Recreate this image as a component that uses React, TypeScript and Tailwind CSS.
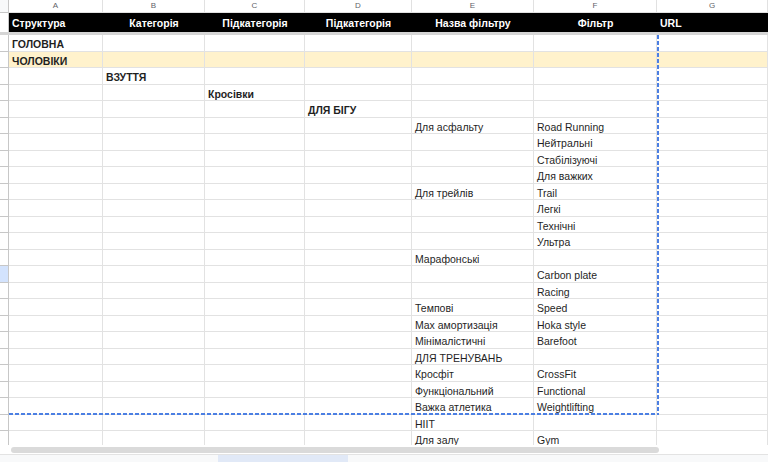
import React from 'react'

const cols = ['A', 'B', 'C', 'D', 'E', 'F', 'G']
const heads = [
  { text: 'Структура', align: 'justify-start' },
  { text: 'Категорія', align: 'justify-center' },
  { text: 'Підкатегорія', align: 'justify-center' },
  { text: 'Підкатегорія', align: 'justify-center' },
  { text: 'Назва фільтру', align: 'justify-center' },
  { text: 'Фільтр', align: 'justify-center' },
  { text: 'URL', align: 'justify-start' },
]

type Row = { cells: string[]; bold?: boolean; fill?: boolean; picked?: boolean }

const rows: Row[] = [
  { cells: ['ГОЛОВНА', '', '', '', '', ''], bold: true },
  { cells: ['ЧОЛОВІКИ', '', '', '', '', ''], bold: true, fill: true },
  { cells: ['', 'ВЗУТТЯ', '', '', '', ''], bold: true },
  { cells: ['', '', 'Кросівки', '', '', ''], bold: true },
  { cells: ['', '', '', 'ДЛЯ БІГУ', '', ''], bold: true },
  { cells: ['', '', '', '', 'Для асфальту', 'Road Running'] },
  { cells: ['', '', '', '', '', 'Нейтральні'] },
  { cells: ['', '', '', '', '', 'Стабілізуючі'] },
  { cells: ['', '', '', '', '', 'Для важких'] },
  { cells: ['', '', '', '', 'Для трейлів', 'Trail'] },
  { cells: ['', '', '', '', '', 'Легкі'] },
  { cells: ['', '', '', '', '', 'Технічні'] },
  { cells: ['', '', '', '', '', 'Ультра'] },
  { cells: ['', '', '', '', 'Марафонські', ''] },
  { cells: ['', '', '', '', '', 'Carbon plate'], picked: true },
  { cells: ['', '', '', '', '', 'Racing'] },
  { cells: ['', '', '', '', 'Темпові', 'Speed'] },
  { cells: ['', '', '', '', 'Max амортизація', 'Hoka style'] },
  { cells: ['', '', '', '', 'Мінімалістичні', 'Barefoot'] },
  { cells: ['', '', '', '', 'ДЛЯ ТРЕНУВАНЬ', ''] },
  { cells: ['', '', '', '', 'Кросфіт', 'CrossFit'] },
  { cells: ['', '', '', '', 'Функціональний', 'Functional'] },
  { cells: ['', '', '', '', 'Важка атлетика', 'Weightlifting'] },
  { cells: ['', '', '', '', 'HIIT', ''] },
  { cells: ['', '', '', '', 'Для залу', 'Gym'] },
  { cells: ['', '', '', '', '', ''] },
]

const grid = 'grid grid-cols-[9px_94px_102px_100px_107px_122px_123px_1fr]'

export default function App() {
  return (
    <div className="w-[768px] h-[462px] flex flex-col overflow-hidden bg-white font-['Liberation_Sans',Arial,sans-serif] text-[#1f1f1f]">
      <div className="relative h-[445px] overflow-hidden">
        {/* column letters */}
        <div className={`${grid} h-[13px]`}>
          <div className="border-r border-b border-[#c7c7c7] bg-[#f8f9fa]" />
          {cols.map((c) => (
            <div
              key={c}
              className="flex items-center justify-center border-r border-b border-[#e1e1e1] text-[8px] text-[#5f6368]"
            >
              {c}
            </div>
          ))}
        </div>

        {/* frozen header */}
        <div className={`${grid} h-[19px]`}>
          <div className="border-r border-[#c7c7c7]" />
          {heads.map((h, i) => (
            <div
              key={i}
              className={`flex items-center ${h.align} px-[3px] pt-[3px] bg-black text-white font-bold text-[10.5px]`}
            >
              {h.text}
            </div>
          ))}
        </div>
        <div className="h-[3px] bg-[#d5d5d5]" />

        {/* data rows */}
        {rows.map((r, ri) => (
          <div key={ri} className={`${grid} h-[16.5px] ${r.fill ? 'bg-[#fff2cc]' : ''}`}>
            <div
              className={`border-r border-b border-[#c7c7c7] ${r.picked ? 'bg-[#d3e3fd]' : 'bg-white'}`}
            />
            {[...r.cells, ''].map((t, ci) => (
              <div
                key={ci}
                className={`flex items-center px-[3px] pt-[5px] border-r border-b border-[#e2e2e2] text-[10.5px] whitespace-nowrap overflow-hidden ${
                  r.bold ? 'font-bold' : ''
                }`}
              >
                {t}
              </div>
            ))}
          </div>
        ))}

        {/* copy selection marquee */}
        <div className="absolute left-[9px] top-[35px] w-[650px] h-[380px] pointer-events-none">
          <div className="absolute right-0 top-0 bottom-0 w-[2px] bg-[repeating-linear-gradient(180deg,#4b7fe3_0_4px,transparent_4px_6px)]" />
          <div className="absolute left-0 right-0 bottom-0 h-[2px] bg-[repeating-linear-gradient(90deg,#4b7fe3_0_4px,transparent_4px_6px)]" />
        </div>
      </div>

      {/* horizontal scrollbar */}
      <div className="h-[9px] flex items-start pl-[11px] pt-[2px] bg-white">
        <div className="w-[648px] h-[6px] rounded-full bg-[#dadada]" />
      </div>
      <div className="h-px bg-[#e3e3e3]" />
      <div className="flex-1 flex bg-[#f8f9fa]">
        <div className="w-[218px]" />
        <div className="w-[130px] bg-[#e1e9f7]" />
      </div>
    </div>
  )
}
